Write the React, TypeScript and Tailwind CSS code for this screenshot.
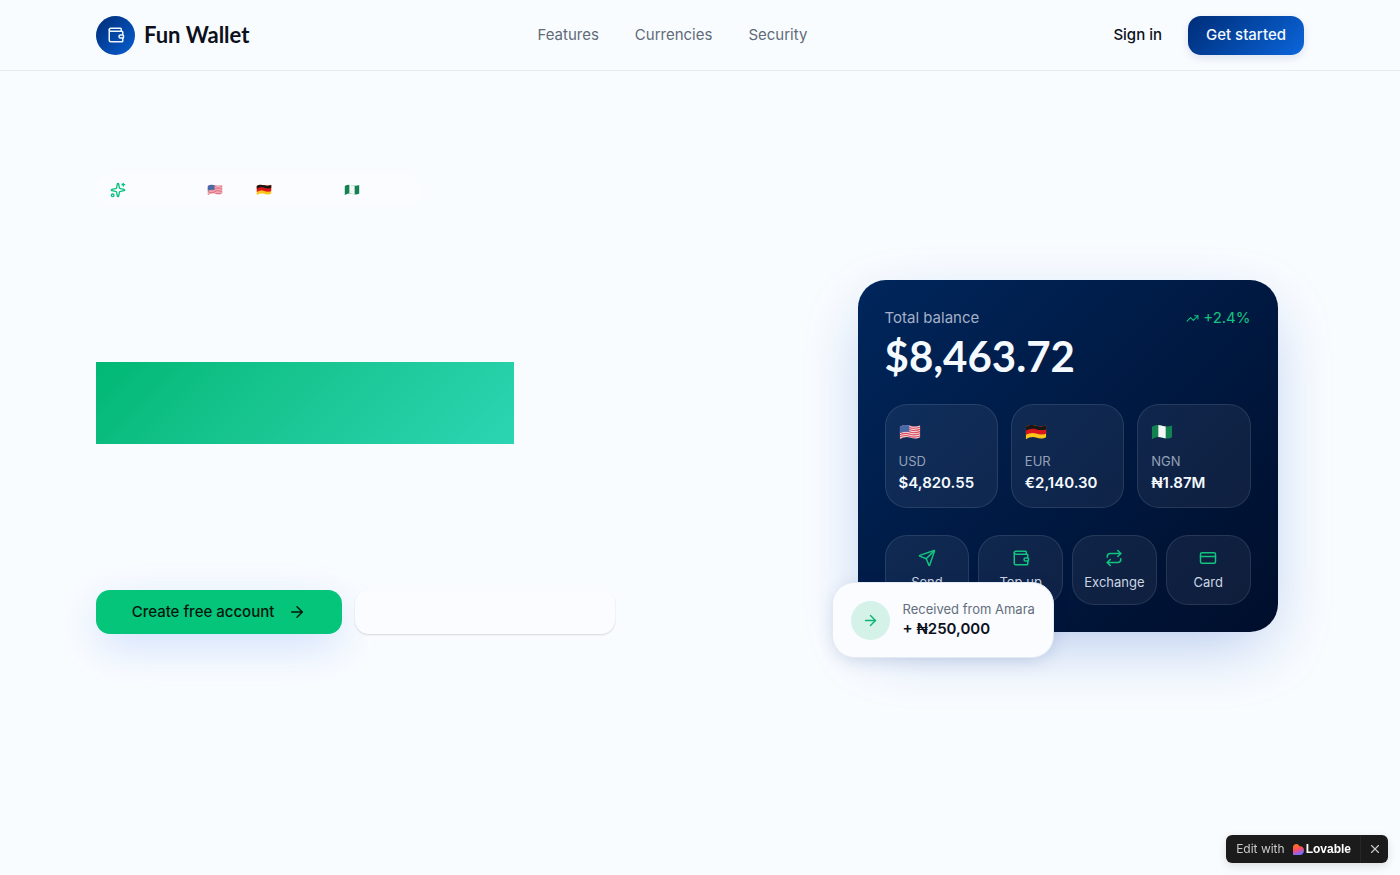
import type { ReactNode } from 'react'
import {
  ArrowRight,
  CreditCard,
  Repeat,
  Send,
  Sparkles,
  TrendingUp,
  Wallet,
  X,
} from 'lucide-react'

type FlagCode = 'us' | 'de' | 'ng'

const links = ['Features', 'Currencies', 'Security']

const balances: { flag: FlagCode; code: string; amount: string }[] = [
  { flag: 'us', code: 'USD', amount: '$4,820.55' },
  { flag: 'de', code: 'EUR', amount: '€2,140.30' },
  { flag: 'ng', code: 'NGN', amount: '₦1.87M' },
]

const actions = [
  { icon: Send, label: 'Send' },
  { icon: Wallet, label: 'Top up' },
  { icon: Repeat, label: 'Exchange' },
  { icon: CreditCard, label: 'Card' },
]

const wave = 'M1 4 C6 1 10 1 15 2.5 C20 4 24 3.5 29 2 V18 C24 20.5 20 20 15 18.5 C10 17 6 18 1 21 Z'

const flagArt: Record<FlagCode, ReactNode> = {
  us: (
    <>
      <rect width="30" height="22" fill="#f3d9df" />
      {[2, 5, 8, 11, 14, 17, 20].map((y) => (
        <path
          key={y}
          d={`M0 ${y + 1} C6 ${y - 2} 10 ${y - 2} 15 ${y} S24 ${y + 1} 30 ${y - 1}`}
          stroke="#dc4a5a"
          strokeWidth="1.5"
          fill="none"
        />
      ))}
      <path d="M0 0H14V11C9 10 5 11 0 13Z" fill="#4a69a8" />
    </>
  ),
  de: (
    <>
      <rect width="30" height="22" fill="#fbc51b" />
      <path d="M0 0H30V13C24 15 20 14.5 15 13C10 11.5 6 12.5 0 15.5Z" fill="#d8161b" />
      <path d="M0 0H30V7C24 9 20 8.5 15 7C10 5.5 6 6.5 0 9.5Z" fill="#171717" />
    </>
  ),
  ng: (
    <>
      <rect width="30" height="22" fill="#128251" />
      <rect x="10" width="10" height="22" fill="#f4f7f6" />
    </>
  ),
}

function Flag({ code, className }: { code: FlagCode; className: string }) {
  return (
    <svg viewBox="0 0 30 22" className={className} aria-hidden="true">
      <clipPath id={`flag-${code}`}>
        <path d={wave} />
      </clipPath>
      <g clipPath={`url(#flag-${code})`}>{flagArt[code]}</g>
    </svg>
  )
}

function LovableMark() {
  return (
    <svg viewBox="0 0 24 24" className="size-[11px]" aria-hidden="true">
      <defs>
        <linearGradient id="lovable" x1="0.3" y1="0" x2="0.6" y2="1">
          <stop offset="0.2" stopColor="#ff6a2b" />
          <stop offset="0.5" stopColor="#fb4b70" />
          <stop offset="0.9" stopColor="#7b6cff" />
        </linearGradient>
      </defs>
      <path
        d="M7.2 0C11 0 13.6 2.6 14.2 5.2C18 4 24 7 24 13.500C24 20 20 24 15 24H0V7.3C0 3.2 3.2 0 7.2 0Z"
        fill="url(#lovable)"
      />
    </svg>
  )
}

const Header = () => {
  return (
    <header className="border-b border-[#e6ebf1]">
      <div className="mx-auto flex h-[70px] max-w-[1256px] items-center justify-between px-6">
        <a href="#" className="flex items-center gap-[9px]">
          <span className="flex size-[39px] items-center justify-center rounded-full bg-linear-135 from-[#002d78] to-[#0a5fd2]">
            <Wallet className="size-[18px] text-[#eef6ff]" />
          </span>
          <span className="font-['Lato',sans-serif] text-[22px] leading-7 font-bold text-[#0c111b]">
            Fun Wallet
          </span>
        </a>

        <nav className="flex gap-9 text-[15px] leading-[22px] text-[#5f6b78]">
          {links.map((link) => (
            <a key={link} href="#">
              {link}
            </a>
          ))}
        </nav>

        <div className="flex items-center gap-2 text-[15px] leading-[22px] font-medium">
          <button className="h-[39px] rounded-[13px] px-[18px] text-[#0c111b]">Sign in</button>
          <button className="h-[39px] rounded-[13px] bg-linear-135 from-[#002d78] to-[#0d66dc] px-[18px] text-[#f3f8ff] shadow-[0_3px_10px_rgba(0,45,120,0.12)]">
            Get started
          </button>
        </div>
      </div>
    </header>
  )
}

const BalanceCard = () => {
  return (
    <div className="rounded-[28px] bg-linear-135 from-[#00265c] to-[#000e2b] p-[27px] text-[#f5faff] shadow-[0_22px_66px_-13px_rgba(20,80,190,0.32)]">
      <div className="flex items-center justify-between text-[15px] leading-[22px]">
        <span className="text-[#a5b1c7]">Total balance</span>
        <span className="flex items-center gap-1 text-[#12c480]">
          <TrendingUp className="size-[13px]" />
          +2.4%
        </span>
      </div>
      <p className="mt-1 font-['Lato',sans-serif] text-[42px] leading-[46px] font-bold">$8,463.72</p>

      <div className="mt-[25px] grid grid-cols-3 gap-[13px]">
        {balances.map((balance) => (
          <div
            key={balance.code}
            className="rounded-[22px] border border-white/10 bg-white/6 p-[13px]"
          >
            <div className="flex h-7 items-center">
              <Flag code={balance.flag} className="w-[22px]" />
            </div>
            <p className="mt-1.5 text-[13px] leading-[18px] text-[#94a1b8]">{balance.code}</p>
            <p className="mt-0.5 text-[15px] leading-[22px] font-semibold">{balance.amount}</p>
          </div>
        ))}
      </div>

      <div className="mt-[27px] grid grid-cols-4 gap-[9px]">
        {actions.map(({ icon: Icon, label }) => (
          <button
            key={label}
            className="flex flex-col items-center gap-1.5 rounded-[22px] border border-white/10 bg-white/6 py-[13px] text-[13px] leading-[18px] text-[#ccd5e3]"
          >
            <Icon className="size-[18px] text-[#12c480]" />
            {label}
          </button>
        ))}
      </div>
    </div>
  )
}

const Hero = () => {
  return (
    <section className="mx-auto grid max-w-[1256px] grid-cols-[13fr_9fr] items-center gap-[52px] px-6 py-[103px]">
      <div className="pb-[104px]">
        <div className="flex h-8 w-[324px] items-center rounded-full bg-[#fafcff] px-3.5">
          <Sparkles className="size-4 text-[#08c17c]" />
          <Flag code="us" className="ml-[81px] w-4" />
          <Flag code="de" className="ml-[33px] w-4" />
          <Flag code="ng" className="ml-[72px] w-4" />
        </div>

        <div className="mt-[156px] h-[82px] w-[418px] bg-linear-135 from-[#00b874] to-[#2bd5b3]" />

        <div className="mt-[146px] flex gap-[13px]">
          <button className="flex h-11 w-[246px] items-center justify-center gap-[14px] rounded-[14px] bg-[#04c579] text-[15px] leading-[22px] font-medium text-[#03160d] shadow-[0_13px_44px_-4px_rgba(30,100,230,0.22)]">
            Create free account
            <ArrowRight className="size-[18px]" />
          </button>
          <button
            aria-label="Sign in"
            className="h-11 w-[260px] rounded-[14px] bg-[#fafcff] shadow-[0_1px_2px_rgba(0,0,0,0.14)]"
          />
        </div>
      </div>

      <div className="relative mx-auto w-full max-w-[420px]">
        <BalanceCard />
        <div className="absolute -bottom-[26px] -left-[26px] flex items-center gap-[13px] rounded-[22px] border border-[#e4eaf2] bg-[#fafcff] px-[18px] py-[17px] shadow-[0_4px_20px_-4px_rgba(0,45,120,0.2)]">
          <span className="flex size-[39px] items-center justify-center rounded-full bg-[#d4f2e8]">
            <ArrowRight className="size-[17px] text-[#0bb577]" />
          </span>
          <div>
            <p className="text-[13px] leading-[18px] text-[#646e7c]">Received from Amara</p>
            <p className="text-[15px] leading-[22px] font-semibold text-[#0c111b]">+ ₦250,000</p>
          </div>
        </div>
      </div>
    </section>
  )
}

const App = () => {
  return (
    <div className="min-h-screen bg-[#f9fcff] font-['Inter',sans-serif]">
      <Header />
      <Hero />

      <div className="fixed right-3 bottom-3 flex h-7 items-center rounded-md bg-[#1b1b1b] text-[12px] leading-4 text-[#c8c8c8] shadow-[0_3px_10px_rgba(0,0,0,0.12)]">
        <a href="#" className="flex items-center pr-[9px] pl-2.5">
          Edit with
          <span className="mr-0.5 ml-2">
            <LovableMark />
          </span>
          <span className="font-['Liberation_Sans',sans-serif] font-bold text-white">Lovable</span>
        </a>
        <button
          aria-label="Close"
          className="flex h-7 w-7 items-center justify-center border-l border-[#262626]"
        >
          <X className="size-[14px]" />
        </button>
      </div>
    </div>
  )
}

export default App
